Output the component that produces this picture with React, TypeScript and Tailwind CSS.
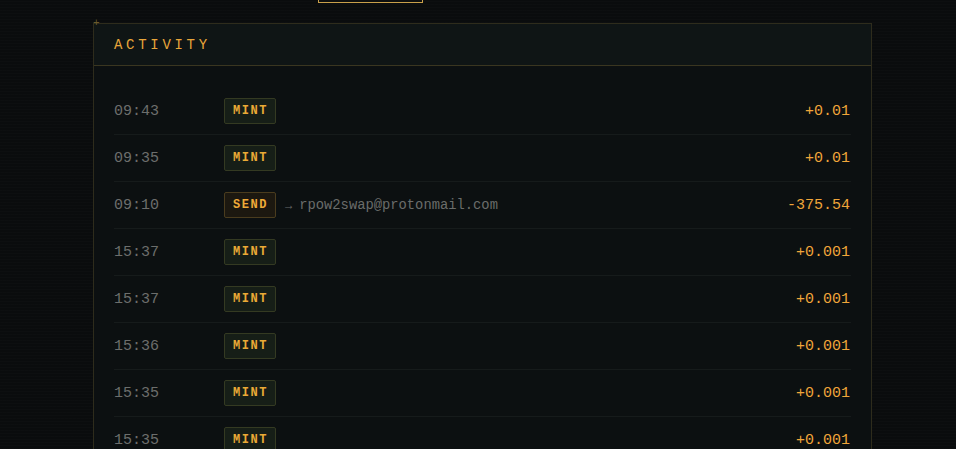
import React from "react";

interface Activity {
  time: string;
  kind: "MINT" | "SEND";
  to?: string;
  amount: string;
}

const rows: Activity[] = [
  { time: "09:43", kind: "MINT", amount: "+0.01" },
  { time: "09:35", kind: "MINT", amount: "+0.01" },
  { time: "09:10", kind: "SEND", to: "rpow2swap@protonmail.com", amount: "-375.54" },
  { time: "15:37", kind: "MINT", amount: "+0.001" },
  { time: "15:37", kind: "MINT", amount: "+0.001" },
  { time: "15:36", kind: "MINT", amount: "+0.001" },
  { time: "15:35", kind: "MINT", amount: "+0.001" },
  { time: "15:35", kind: "MINT", amount: "+0.001" },
];

export default function App() {
  return (
    <div className="min-h-screen h-[449px] overflow-hidden bg-[#0a0c0d] bg-[repeating-linear-gradient(0deg,rgba(255,255,255,0.012)_0px,rgba(255,255,255,0.012)_1px,transparent_1px,transparent_3px)] font-['Liberation_Mono',monospace]">
      {/* tab button cut off by scroll */}
      <div className="ml-[318px] -mt-[30px] h-[33px] w-[105px] border border-[#c9a04a] bg-[#0d0f0f]" />

      {/* Activity panel */}
      <div className="relative ml-[93px] mt-[20px] w-[779px] border border-[#2e2c1c] bg-[#0c1011]">
        <span className="absolute -left-[1px] -top-[6px] text-[11px] leading-none text-[#6a5a2c]">+</span>

        <div className="border-b border-[#3a3620] bg-[#0f1515] px-5 pt-[13px] pb-[11px]">
          <h2 className="text-[14px] leading-[17px] tracking-[3.7px] text-[#e8a53a]">ACTIVITY</h2>
        </div>

        <div className="px-5 pt-[22px]">
          {rows.map((row, i) => (
            <div
              key={i}
              className="flex h-[47px] items-center border-b border-[#161b1b] pb-px"
            >
              <span className="mt-[4px] w-[110px] text-[15px] text-[#6c6e6c]">{row.time}</span>
              {row.kind === "MINT" ? (
                <span className="flex h-[26px] w-[52px] items-center justify-center rounded-[2px] border border-[#343a22] bg-[#161e17] pl-[1px] text-[12px] font-bold tracking-[1.5px] text-[#eaaa36]">
                  MINT
                </span>
              ) : (
                <span className="flex h-[26px] w-[52px] items-center justify-center rounded-[2px] border border-[#4a3c1e] bg-[#1c1810] pl-[1px] text-[12px] font-bold tracking-[1.5px] text-[#eeaa38]">
                  SEND
                </span>
              )}
              {row.to && (
                <span className="ml-[9px] mt-[3px] text-[13.8px] text-[#6a6c6a]">
                  <span className="mr-[7px] text-[12px]">→</span>
                  {row.to}
                </span>
              )}
              <span className="ml-auto mr-[1px] mt-[4px] text-[15px] text-[#f0a63a]">{row.amount}</span>
            </div>
          ))}
        </div>
      </div>
    </div>
  );
}
